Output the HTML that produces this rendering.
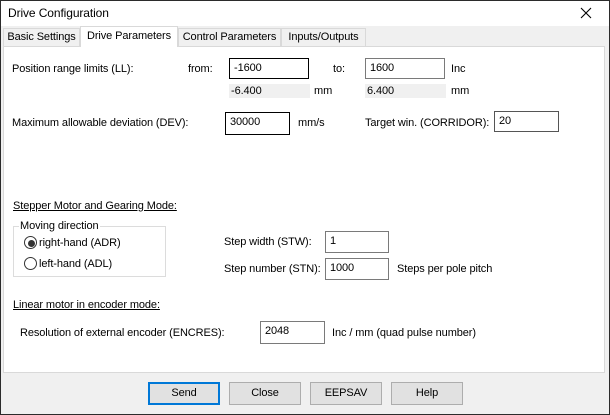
<!DOCTYPE html>
<html><head><meta charset="utf-8"><style>
*{margin:0;padding:0;box-sizing:border-box}
body{width:610px;height:415px;position:relative;overflow:hidden;background:#f0f0f0;font-family:"Liberation Sans",sans-serif;font-size:11px;letter-spacing:-0.1px;color:#000}
.a{position:absolute;white-space:nowrap;line-height:14px}
.frame{position:absolute;left:0;top:0;width:610px;height:415px;border:1px solid #2b2b2b;pointer-events:none}
.title{position:absolute;left:1px;top:1px;width:608px;height:25px;background:#fff}
.tab{position:absolute;background:#f0f0f0;border:1px solid #d9d9d9;border-bottom:none;text-align:center;line-height:17px;white-space:nowrap}
.panel{position:absolute;left:3px;top:46px;width:602px;height:327px;background:#fff;border:1px solid #d9d9d9}
.box{position:absolute;border:1px solid #7a7a7a;background:#fff;padding-left:4px;line-height:19px;white-space:nowrap}
.dk{border-color:#000}
.ro{position:absolute;background:#f0f0f0;padding-left:2px;line-height:14px}
.btn{position:absolute;top:382px;height:23px;width:72px;background:#e1e1e1;border:1px solid #adadad;text-align:center;line-height:21px}
.u{text-decoration:underline}
.rad{position:absolute;width:13px;height:13px;border:1px solid #333;border-radius:50%;background:#fff}
</style></head><body>
<div class="title"></div>
<div class="a" style="left:8px;top:6px;font-size:12px">Drive Configuration</div>
<svg class="a" style="left:580px;top:7px" width="12" height="12"><path d="M1 1L11 11M11 1L1 11" stroke="#000" stroke-width="1.1"/></svg>
<div class="panel"></div>
<div class="tab" style="left:3px;top:28px;width:77px;height:18px">Basic Settings</div>
<div class="tab" style="left:178px;top:28px;width:103px;height:18px">Control Parameters</div>
<div class="tab" style="left:281px;top:28px;width:85px;height:18px">Inputs/Outputs</div>
<div class="tab" style="left:80px;top:26px;width:98px;height:21px;background:#fff;line-height:18px">Drive Parameters</div>

<div class="a" style="left:12px;top:62px">Position range limits (LL):</div>
<div class="a" style="left:188px;top:62px">from:</div>
<div class="box dk" style="left:229px;top:58px;width:80px;height:21px">-1600</div>
<div class="a" style="left:333px;top:62px">to:</div>
<div class="box" style="left:365px;top:58px;width:80px;height:21px">1600</div>
<div class="a" style="left:451px;top:62px">Inc</div>
<div class="ro" style="left:229px;top:84px;width:81px">-6.400</div>
<div class="a" style="left:314px;top:84px">mm</div>
<div class="ro" style="left:365px;top:84px;width:81px">6.400</div>
<div class="a" style="left:451px;top:84px">mm</div>

<div class="a" style="left:12px;top:116px">Maximum allowable deviation (DEV):</div>
<div class="box dk" style="left:225px;top:112px;width:65px;height:23px">30000</div>
<div class="a" style="left:298px;top:116px">mm/s</div>
<div class="a" style="left:365px;top:116px">Target win. (CORRIDOR):</div>
<div class="box" style="left:494px;top:111px;width:65px;height:21px;border-color:#555">20</div>

<div class="a u" style="left:13px;top:199px">Stepper Motor and Gearing Mode:</div>
<div style="position:absolute;left:13px;top:226px;width:153px;height:51px;border:1px solid #dcdcdc"></div>
<div class="a" style="left:19px;top:219px;background:#fff;padding:0 1px">Moving direction</div>
<div class="rad" style="left:24px;top:236px"></div><div style="position:absolute;left:28px;top:240px;width:7px;height:7px;border-radius:50%;background:#333"></div>
<div class="a" style="left:39px;top:236px">right-hand (ADR)</div>
<div class="rad" style="left:24px;top:257px"></div>
<div class="a" style="left:39px;top:257px">left-hand (ADL)</div>

<div class="a" style="left:224px;top:235px">Step width (STW):</div>
<div class="box" style="left:325px;top:231px;width:64px;height:22px">1</div>
<div class="a" style="left:224px;top:262px">Step number (STN):</div>
<div class="box" style="left:325px;top:258px;width:64px;height:22px">1000</div>
<div class="a" style="left:397px;top:262px">Steps per pole pitch</div>

<div class="a u" style="left:13px;top:298px">Linear motor in encoder mode:</div>
<div class="a" style="left:20px;top:326px">Resolution of external encoder (ENCRES):</div>
<div class="box" style="left:260px;top:321px;width:65px;height:23px">2048</div>
<div class="a" style="left:332px;top:326px">Inc / mm (quad pulse number)</div>

<div class="btn" style="left:148px;border:2px solid #0078d7;line-height:19px">Send</div>
<div class="btn" style="left:229px">Close</div>
<div class="btn" style="left:310px">EEPSAV</div>
<div class="btn" style="left:391px">Help</div>
<div class="frame"></div>
</body></html>
